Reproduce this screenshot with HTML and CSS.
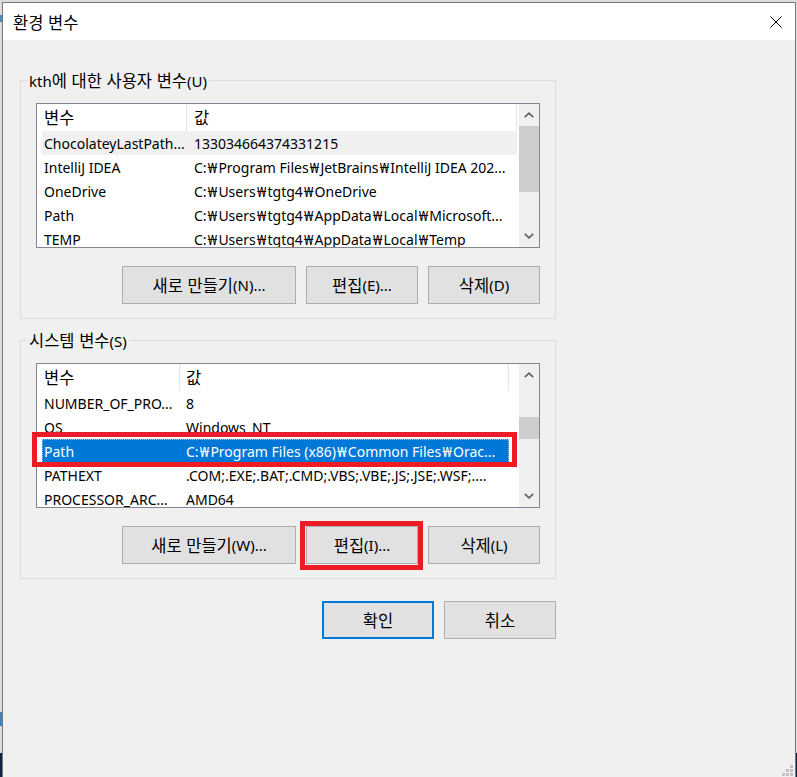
FILE: index.html
```html
<!DOCTYPE html>
<html lang="ko">
<head>
<meta charset="utf-8">
<title>환경 변수</title>
<link rel="stylesheet" href="styles.css">
</head>
<body>
<div class="window">
  <div class="titlebar">
    <span class="title ko">환경 변수</span>
    <svg class="close" width="12" height="12" viewBox="0 0 12 12"><path d="M0.5 0.5L11.5 11.5M11.5 0.5L0.5 11.5" stroke="#000" stroke-width="1" fill="none"/></svg>
  </div>
  <div class="client">
    <fieldset class="group">
      <legend>kth<span class="ko">에 대한 사용자 변수</span>(U)</legend>
      <div class="lb-wrap">
        <div class="listbox">
          <div class="lv user">
            <div class="hdr"><div class="h1"><span class="ko">변수</span></div><div class="h2"><span class="ko">값</span></div></div>
            <div class="row inactive"><div class="c1">ChocolateyLastPath...</div><div class="c2">133034664374331215</div></div>
            <div class="row"><div class="c1">IntelliJ IDEA</div><div class="c2">C:<span class="won">₩</span>Program Files<span class="won">₩</span>JetBrains<span class="won">₩</span>IntelliJ IDEA 202...</div></div>
            <div class="row"><div class="c1">OneDrive</div><div class="c2">C:<span class="won">₩</span>Users<span class="won">₩</span>tgtg4<span class="won">₩</span>OneDrive</div></div>
            <div class="row"><div class="c1">Path</div><div class="c2">C:<span class="won">₩</span>Users<span class="won">₩</span>tgtg4<span class="won">₩</span>AppData<span class="won">₩</span>Local<span class="won">₩</span>Microsoft...</div></div>
            <div class="row"><div class="c1">TEMP</div><div class="c2">C:<span class="won">₩</span>Users<span class="won">₩</span>tgtg4<span class="won">₩</span>AppData<span class="won">₩</span>Local<span class="won">₩</span>Temp</div></div>
          </div>
          <div class="sbar">
            <div class="arrow"><svg width="10" height="6" viewBox="0 0 10 6"><path d="M0.8 5.2L5 1.2L9.2 5.2" stroke="#606060" stroke-width="1.6" fill="none"/></svg></div>
            <div class="track"><div class="thumb thumb-user"></div></div>
            <div class="arrow"><svg width="10" height="6" viewBox="0 0 10 6"><path d="M0.8 0.8L5 4.8L9.2 0.8" stroke="#606060" stroke-width="1.6" fill="none"/></svg></div>
          </div>
        </div>
      </div>
      <div class="btns">
        <button class="btn wide"><span class="ko">새로 만들기</span>(N)...</button>
        <button class="btn"><span class="ko">편집</span>(E)...</button>
        <button class="btn"><span class="ko">삭제</span>(D)</button>
      </div>
    </fieldset>

    <fieldset class="group">
      <legend><span class="ko">시스템 변수</span>(S)</legend>
      <div class="lb-wrap">
        <div class="listbox">
          <div class="lv sys">
            <div class="hdr"><div class="h1"><span class="ko">변수</span></div><div class="h2"><span class="ko">값</span></div></div>
            <div class="row"><div class="c1">NUMBER_OF_PRO...</div><div class="c2">8</div></div>
            <div class="row"><div class="c1">OS</div><div class="c2">Windows_NT</div></div>
            <div class="row selected"><div class="c1">Path</div><div class="c2">C:<span class="won">₩</span>Program Files (x86)<span class="won">₩</span>Common Files<span class="won">₩</span>Orac...</div></div>
            <div class="row"><div class="c1">PATHEXT</div><div class="c2">.COM;.EXE;.BAT;.CMD;.VBS;.VBE;.JS;.JSE;.WSF;....</div></div>
            <div class="row"><div class="c1">PROCESSOR_ARC...</div><div class="c2">AMD64</div></div>
          </div>
          <div class="sbar">
            <div class="arrow"><svg width="10" height="6" viewBox="0 0 10 6"><path d="M0.8 5.2L5 1.2L9.2 5.2" stroke="#606060" stroke-width="1.6" fill="none"/></svg></div>
            <div class="track"><div class="thumb thumb-sys"></div></div>
            <div class="arrow"><svg width="10" height="6" viewBox="0 0 10 6"><path d="M0.8 0.8L5 4.8L9.2 0.8" stroke="#606060" stroke-width="1.6" fill="none"/></svg></div>
          </div>
        </div>
        <div class="mark mark-row"></div>
      </div>
      <div class="btns">
        <button class="btn wide"><span class="ko">새로 만들기</span>(W)...</button>
        <button class="btn marked"><span class="ko">편집</span>(I)...</button>
        <button class="btn"><span class="ko">삭제</span>(L)</button>
      </div>
    </fieldset>

    <div class="dlg-btns">
      <button class="btn default"><span class="ko">확인</span></button>
      <button class="btn"><span class="ko">취소</span></button>
    </div>
  </div>
  <svg class="grip" width="11" height="11" viewBox="0 0 11 11">
    <rect x="8" y="0" width="3" height="3" fill="#c2c2c2"/>
    <rect x="4" y="4" width="3" height="3" fill="#c2c2c2"/>
    <rect x="8" y="4" width="3" height="3" fill="#c2c2c2"/>
    <rect x="0" y="8" width="3" height="3" fill="#c2c2c2"/>
    <rect x="4" y="8" width="3" height="3" fill="#c2c2c2"/>
    <rect x="8" y="8" width="3" height="3" fill="#c2c2c2"/>
  </svg>
</div>
</body>
</html>
```
FILE: styles.css
```css
* { box-sizing: border-box; }
html, body { margin: 0; padding: 0; }
body {
  width: 797px;
  height: 777px;
  overflow: hidden;
  padding: 2px 0 0 2px;
  background:
    linear-gradient(#3f7fc8, #3f7fc8) 0 712px / 2px 14px no-repeat,
    linear-gradient(#4a86c8, #4a86c8) 0 15px / 2px 7px no-repeat,
    linear-gradient(to bottom, #dcdcdc 0, #dcdcdc 753px, #0c2440 753px);
  font-family: "Noto Sans", "Noto Sans CJK KR", sans-serif;
  font-size: 14px;
  color: #000;
}
.ko {
  font-family: "Noto Sans CJK KR", "Noto Sans", sans-serif;
  font-size: 16.5px;
}
.won { margin: 0 1.2px; }
.window {
  position: relative;
  width: 794px;
  height: 780px;
  border: 1px solid #7a7a7a;
  border-bottom: none;
  background: #f0f0f0;
}
.titlebar {
  height: 37px;
  background: #fff;
  display: flex;
  align-items: center;
  justify-content: space-between;
  padding: 0 13px 0 10px;
}
.title { line-height: 20px; }
.close { display: block; }
.client { padding: 30px 0 0 17px; }
.group {
  margin: 0;
  min-width: 0;
  width: 536px;
  border: 1px solid #dcdcdc;
  padding: 13px 15px 14px 15px;
}
.group + .group { margin-top: 11px; }
.group legend {
  padding: 0 2px;
  margin-left: -9px;
  line-height: 20px;
  height: 20px;
  font-size: 15px;
}
.lb-wrap { position: relative; }
.listbox {
  width: 504px;
  height: 145px;
  border: 1px solid #828790;
  background: #fff;
  display: flex;
  overflow: hidden;
}
.lv { flex: 1; min-width: 0; overflow: hidden; }
.hdr { display: flex; height: 27px; align-items: center; }
.hdr > div { height: 27px; line-height: 27px; border-right: 1px solid #e5e5e5; white-space: nowrap; }
.user .h1 { width: 150px; padding-left: 7px; }
.user .h2 { width: 330px; padding-left: 7px; }
.sys .h1 { width: 143px; padding-left: 7px; }
.sys .h2 { width: 329px; padding-left: 6px; }
.row {
  display: flex;
  height: 24px;
  padding-top: 1px;
  margin-left: 5px;
  white-space: nowrap;
}
.row > div { line-height: 24px; overflow: hidden; }
.user .row { width: 475px; }
.sys .row { width: 467px; }
.user .c1 { width: 145px; flex: none; padding-left: 2px; }
.user .c2 { flex: 1; padding-left: 7px; }
.sys .c1 { width: 138px; flex: none; padding-left: 2px; }
.sys .c2 { flex: 1; padding-left: 6px; }
.row.inactive { background: #f0f0f0; }
.row.selected {
  background: #0078d7;
  color: #fff;
  outline: 1px dotted #9cc6ee;
  outline-offset: -1px;
}
.sbar {
  width: 20px;
  flex: none;
  background: #f0f0f0;
  display: flex;
  flex-direction: column;
}
.arrow {
  height: 22px;
  flex: none;
  display: flex;
  align-items: center;
  justify-content: center;
}
.arrow svg { display: block; }
.track { flex: 1; }
.thumb { background: #cdcdcd; }
.thumb-user { height: 66px; }
.thumb-sys { margin-top: 31px; height: 22px; }
.btns {
  display: flex;
  justify-content: flex-end;
  margin-top: 18px;
}
.btn {
  width: 112px;
  height: 38px;
  padding: 0;
  background: #e1e1e1;
  border: 1px solid #adadad;
  font-family: inherit;
  font-size: 15px;
  line-height: 20px;
  color: #000;
  display: flex;
  align-items: center;
  justify-content: center;
  white-space: nowrap;
}
.btn + .btn { margin-left: 10px; }
.btn.wide { width: 174px; }
.btn.default { border: 2px solid #0078d7; }
.btn.marked { position: relative; }
.btn.marked::after {
  content: "";
  position: absolute;
  left: -7px;
  right: -6px;
  top: -6px;
  bottom: -7px;
  border: 5px solid #ed1c24;
}
.mark {
  position: absolute;
  border: 5px solid #ed1c24;
}
.mark-row { left: -4px; top: 69px; width: 485px; height: 35px; }
.dlg-btns {
  width: 536px;
  display: flex;
  justify-content: flex-end;
  margin-top: 22px;
}
.grip { position: absolute; right: 2px; top: 762px; }
```
